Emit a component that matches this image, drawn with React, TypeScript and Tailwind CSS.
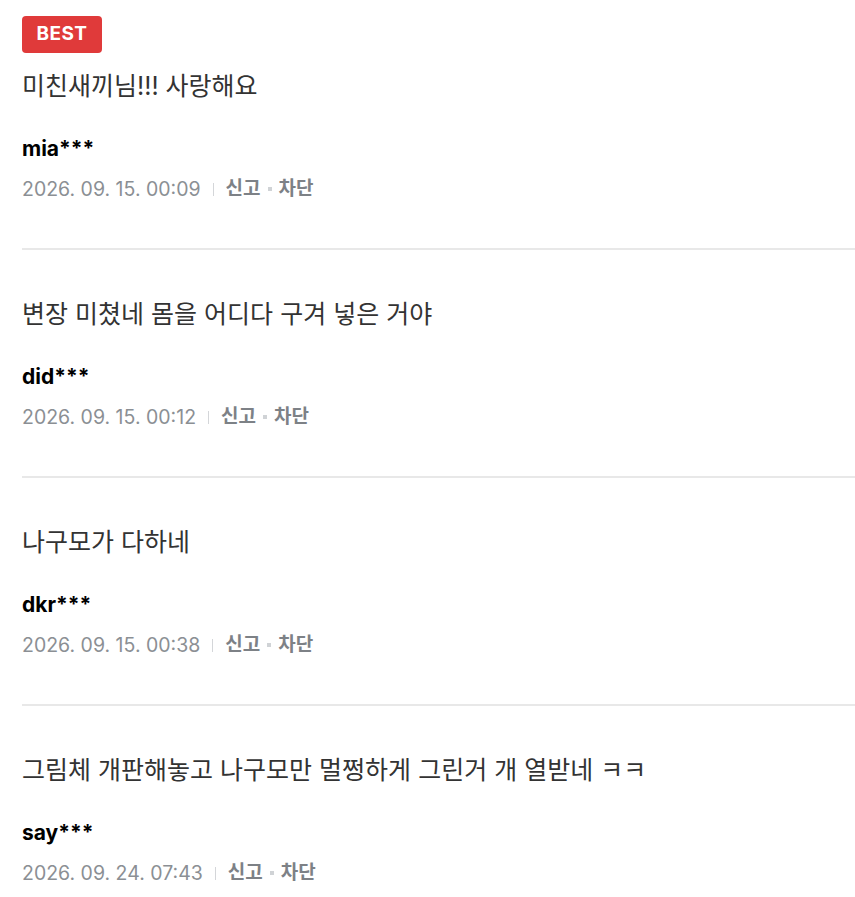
import React from 'react';

interface Comment {
  text: string;
  user: string;
  date: string;
  best?: boolean;
}

const comments: Comment[] = [
  { text: '미친새끼님!!! 사랑해요', user: 'mia***', date: '2026. 09. 15. 00:09', best: true },
  { text: '변장 미쳤네 몸을 어디다 구겨 넣은 거야', user: 'did***', date: '2026. 09. 15. 00:12' },
  { text: '나구모가 다하네', user: 'dkr***', date: '2026. 09. 15. 00:38' },
  { text: '그림체 개판해놓고 나구모만 멀쩡하게 그린거 개 열받네 ㅋㅋ', user: 'say***', date: '2026. 09. 24. 07:43' },
];

function CommentItem({ c, last }: { c: Comment; last: boolean }) {
  return (
    <li className={c.best ? 'pt-4 pb-[45px] border-b-2 border-[#e8e8e8]' : last ? 'pt-[48px] pb-4' : 'pt-[48px] pb-[45px] border-b-2 border-[#e8e8e8]'}>
      {c.best && (
        <div className="mb-[17px] flex">
          <span className="flex h-[37px] w-[80px] items-center justify-center rounded-[4px] bg-[#e03a3a] text-[19px] font-bold tracking-[0.4px] text-white">
            BEST
          </span>
        </div>
      )}
      <p className="text-[25px] leading-[32px] text-[#333333]">{c.text}</p>
      <div className="mt-[33px] text-[21px] leading-[28px] font-bold text-black">{c.user}</div>
      <div className="mt-[12px] flex items-center text-[19px] leading-[28px]">
        <span className="text-[19.5px] text-[#8b8f94]">{c.date}</span>
        <span className="mx-[12px] h-[13px] w-px bg-[#d4d6d9]" />
        <button className="font-bold text-[#7d8186]">신고</button>
        <span className="mx-[7px] h-[4px] w-[4px] bg-[#d0d3d6]" />
        <button className="font-bold text-[#7d8186]">차단</button>
      </div>
    </li>
  );
}

export default function App() {
  return (
    <div
      className="min-h-screen bg-white pl-[22px]"
      style={{ fontFamily: 'Inter, "Noto Sans CJK KR", "Noto Sans", sans-serif' }}
    >
      <ul>
        {comments.map((c, i) => (
          <CommentItem key={c.user} c={c} last={i === comments.length - 1} />
        ))}
      </ul>
    </div>
  );
}
